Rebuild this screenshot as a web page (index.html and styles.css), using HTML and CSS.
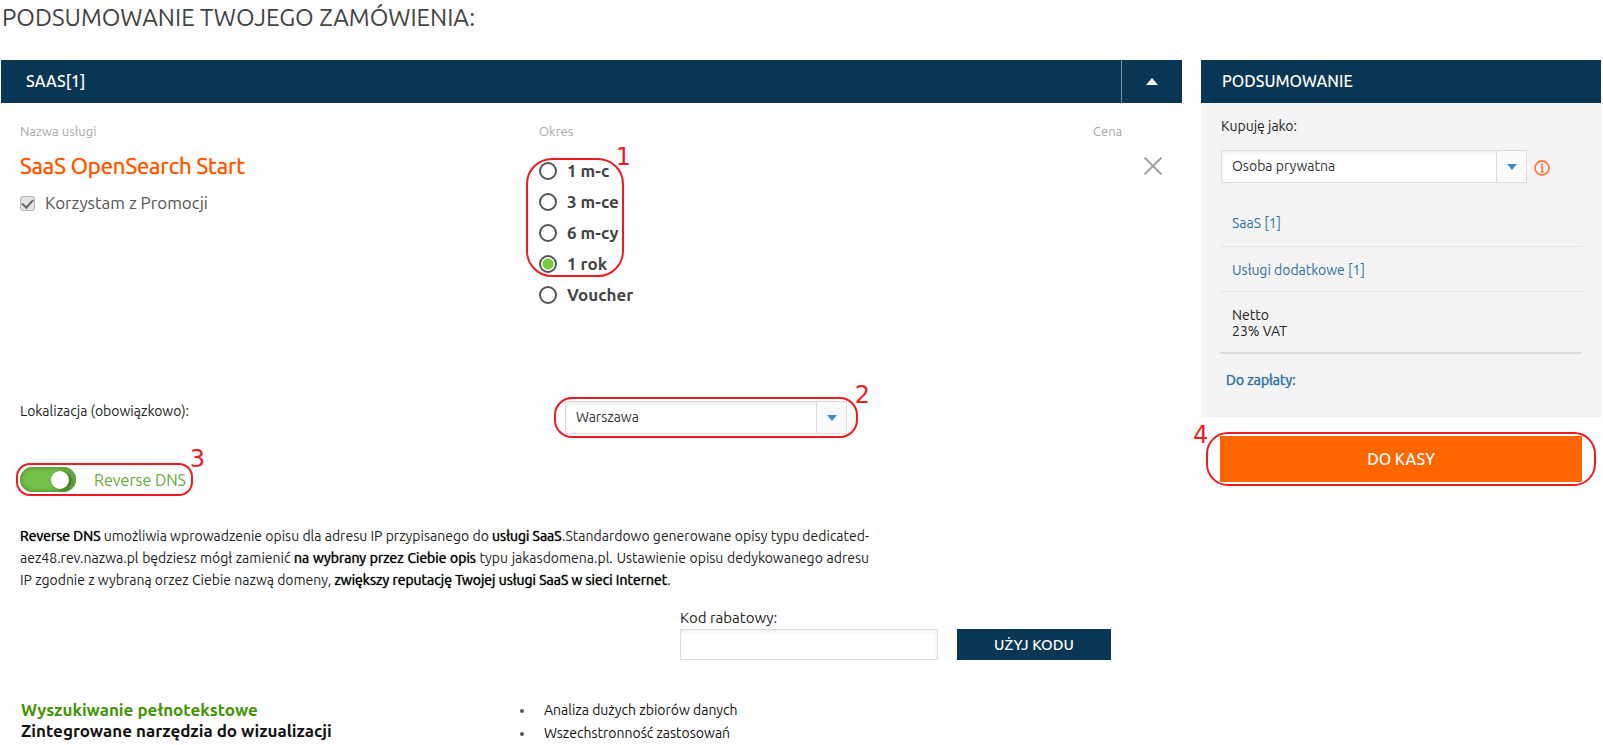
FILE: index.html
```html
<!DOCTYPE html>
<html lang="pl">
<head>
<meta charset="utf-8">
<title>Podsumowanie zamówienia</title>
<link rel="stylesheet" href="styles.css">
</head>
<body>
<h1 class="page-title">PODSUMOWANIE TWOJEGO ZAMÓWIENIA:</h1>
<div class="layout">
  <main class="order">
    <header class="bar">
      <h2 class="bar-title">SAAS[1]</h2>
      <button class="collapse" type="button" aria-label="Zwiń"><svg width="12" height="7" viewBox="0 0 12 7"><path d="M0 7 6 0l6 7z" fill="#fff"/></svg></button>
    </header>

    <section class="service">
      <div class="cell">
        <div class="col-label">Nazwa usługi</div>
        <h3 class="service-name">SaaS OpenSearch Start</h3>
        <label class="promo"><input class="check" type="checkbox" checked>Korzystam z Promocji</label>
      </div>
      <div class="cell">
        <div class="col-label">Okres</div>
        <div class="periods">
          <label class="period"><input class="radio" type="radio" name="period">1 m-c</label>
          <label class="period"><input class="radio" type="radio" name="period">3 m-ce</label>
          <label class="period"><input class="radio" type="radio" name="period">6 m-cy</label>
          <label class="period"><input class="radio" type="radio" name="period" checked>1 rok</label>
          <label class="period"><input class="radio" type="radio" name="period">Voucher</label>
          <div class="mark mark-period"><span class="mark-no">1</span></div>
        </div>
      </div>
      <div class="cell">
        <div class="col-label">Cena</div>
        <button class="remove" type="button" aria-label="Usuń"><svg width="18" height="18" viewBox="0 0 18 18"><path d="M0.500 0.500 17.500 17.500M17.500 0.500 0.500 17.500" stroke="#a3a3a3" stroke-width="2" fill="none"/></svg></button>
      </div>
    </section>

    <section class="location">
      <label class="location-label" for="location">Lokalizacja (obowiązkowo):</label>
      <div class="select location-select">
        <select class="select-box" id="location"><option>Warszawa</option></select>
        <span class="select-arrow"><svg width="10" height="6" viewBox="0 0 10 6"><path d="M0 0h10L5 6z" fill="#428bca"/></svg></span>
        <div class="mark mark-location"><span class="mark-no">2</span></div>
      </div>
    </section>

    <section class="dns">
      <label class="dns-switch"><input class="switch" type="checkbox" checked>Reverse DNS<span class="mark mark-dns"><span class="mark-no">3</span></span></label>
      <p class="dns-text"><b>Reverse DNS</b> umożliwia wprowadzenie opisu dla adresu IP przypisanego do <b>usługi SaaS</b>.Standardowo generowane opisy typu dedicated-aez48.rev.nazwa.pl będziesz mógł zamienić <b>na wybrany przez Ciebie opis</b> typu jakasdomena.pl. Ustawienie opisu dedykowanego adresu IP zgodnie z wybraną orzez Ciebie nazwą domeny, <b>zwiększy reputację Twojej usługi SaaS w sieci Internet</b>.</p>
    </section>

    <form class="coupon">
      <div class="coupon-field">
        <label class="coupon-label" for="code">Kod rabatowy:</label>
        <input class="coupon-input" id="code" type="text">
      </div>
      <button class="coupon-button" type="button">UŻYJ KODU</button>
    </form>

    <section class="features">
      <div class="features-main"><p class="feature-green">Wyszukiwanie pełnotekstowe</p><p>Zintegrowane narzędzia do wizualizacji</p></div>
      <ul class="features-list"><li>Analiza dużych zbiorów danych</li><li>Wszechstronność zastosowań</li></ul>
    </section>
  </main>

  <aside class="summary">
    <header class="bar"><h2 class="bar-title summary-title">PODSUMOWANIE</h2></header>
    <div class="summary-body">
      <label class="buyer-label" for="buyer">Kupuję jako:</label>
      <div class="buyer">
        <div class="select buyer-select">
          <select class="select-box" id="buyer"><option>Osoba prywatna</option></select>
          <span class="select-arrow"><svg width="10" height="6" viewBox="0 0 10 6"><path d="M0 0h10L5 6z" fill="#428bca"/></svg></span>
        </div>
        <svg class="info" width="16" height="16" viewBox="0 0 16 16"><circle cx="8" cy="8" r="7" fill="none" stroke="#ff7f45" stroke-width="1.800"/><circle cx="8" cy="4.600" r="1.200" fill="#ff7f45"/><path d="M6.500 7.200H8.200V12M6.500 12H9.800" fill="none" stroke="#ff7f45" stroke-width="1.700"/></svg>
      </div>
      <a class="line" href="#">SaaS [1]</a>
      <a class="line" href="#">Usługi dodatkowe [1]</a>
      <div class="totals">Netto<br>23% VAT</div>
      <div class="due">Do zapłaty:</div>
    </div>
    <div class="checkout">
      <button class="checkout-button" type="button">DO KASY</button>
      <div class="mark mark-checkout"><span class="mark-no">4</span></div>
    </div>
  </aside>
</div>
</body>
</html>
```
FILE: styles.css
```css
* { box-sizing: border-box; }
body {
  margin: 0;
  background: #fdfdfd;
  color: #222;
  font: 14px/16px Ubuntu, "Noto Sans", "Open Sans", sans-serif;
}
h1, h2, h3, p, ul { margin: 0; padding: 0; font-weight: 400; }
button, input, select { font: inherit; margin: 0; }
button { border: 0; padding: 0; background: none; cursor: pointer; }
svg { display: block; }

.page-title {
  padding: 2px 2px 26px;
  font-size: 24px;
  line-height: 32px;
  color: #444;
}
.layout { display: flex; gap: 19px; padding: 0 2px 0 1px; align-items: flex-start; }
.order { flex: 1; background: #fefefe; }
.summary { flex: 0 0 400px; }

.bar { display: flex; height: 43px; background: #0a3656; color: #fff; }
.bar-title { flex: 1; padding: 0 25px; font-size: 16px; line-height: 43px; font-weight: 500; }
.summary-title { padding: 0 21px; }
.collapse { width: 61px; border-left: 1px solid #7f95a6; display: grid; place-items: center; }

.service { display: grid; grid-template-columns: 519px 1fr 89px; padding: 20px 0 0 19px; }
.col-label { font-size: 13px; line-height: 16px; color: #aaa; }
.service-name { padding-top: 11px; font-size: 22px; line-height: 32px; color: #ff5500; text-shadow: 0 0 1px #ff5500; }
.promo { display: flex; align-items: center; gap: 10px; padding-top: 9px; font-size: 17px; line-height: 24px; color: #555; }
.check {
  appearance: none;
  width: 15px;
  height: 15px;
  border: 1px solid #b4b4b4;
  border-radius: 3px;
  background: #e4e4e4;
  display: grid;
  place-items: center;
}
.check:checked::before {
  content: "";
  width: 9px;
  height: 5px;
  border: solid #666;
  border-width: 0 0 2px 2px;
  transform: translateY(-1px) rotate(-48deg);
}
.periods { position: relative; padding-top: 16px; }
.period { display: flex; align-items: center; gap: 10px; height: 31px; font-size: 17px; line-height: 24px; font-weight: 600; color: #444; }
.radio {
  appearance: none;
  width: 18px;
  height: 18px;
  border: 2px solid #555;
  border-radius: 50%;
  background: #fff;
}
.radio:checked { background: radial-gradient(circle, #7ac943 5px, #fff 6px); }
.remove { margin: 18px 0 0 51px; }

.mark { position: absolute; border: 2px solid #ed1c24; pointer-events: none; }
.mark-no { position: absolute; color: #ed1c24; font: 24px/24px "DejaVu Sans", sans-serif; }
.mark-period { left: -13px; top: 19px; width: 98px; height: 119px; border-radius: 26px; }
.mark-period .mark-no { right: -9px; top: -15px; }
.mark-location { inset: -4px -11px; border-radius: 18px; }
.mark-location .mark-no { right: -14px; top: -16px; }
.mark-dns { inset: -4px -7px -4px -4px; border-radius: 14px; }
.mark-dns .mark-no { right: -14px; top: -18px; }
.mark-checkout { inset: -4px -14px -4px -14px; border-radius: 22px; }
.mark-checkout .mark-no { left: -15px; top: -11px; }

.select { position: relative; display: flex; height: 33px; }
.select-box {
  appearance: none;
  flex: 1;
  height: 33px;
  padding: 0 40px 2px 10px;
  border: 1px solid #ddd;
  border-radius: 0;
  background: #fff;
  box-shadow: inset 0 2px 4px #eee;
  color: #333;
}
.select-arrow {
  position: absolute;
  right: 1px;
  top: 1px;
  bottom: 1px;
  width: 30px;
  border-left: 1px solid #ddd;
  background: #fafafa;
  display: grid;
  place-items: center;
  pointer-events: none;
}
.location { display: flex; padding: 91px 0 0 19px; }
.location-label { width: 545px; padding-top: 2px; }
.location-select { width: 282px; }

.dns { padding: 33px 0 0 19px; }
.dns-switch { position: relative; display: inline-flex; align-items: center; gap: 18px; height: 25px; font-size: 16px; color: #6aaa3c; }
.switch {
  appearance: none;
  width: 56px;
  height: 25px;
  padding: 3px 7px;
  border-radius: 13px;
  background: #76c04a;
  box-shadow: inset 0 0 4px 1px #558b36;
  display: flex;
  align-items: center;
  justify-content: flex-end;
}
.switch::before { content: ""; width: 18px; height: 18px; border-radius: 50%; background: #fff; box-shadow: 3px 1px 4px #38661f; }
.dns-text { max-width: 849px; padding-top: 33px; line-height: 22px; text-align: justify; }
.dns-text b { font-weight: 400; text-shadow: 0 0 1px currentColor; color: #000; }

.coupon { display: flex; align-items: flex-end; gap: 19px; padding: 19px 71px 0 0; justify-content: flex-end; }
.coupon-field { width: 258px; }
.coupon-label { display: block; padding-bottom: 3px; font-size: 15px; }
.coupon-input { display: block; width: 100%; height: 31px; border: 1px solid #ddd; background: #fff; box-shadow: inset 0 2px 4px #eee; }
.coupon-button { width: 154px; height: 31px; background: #0a3656; color: #fff; font-size: 15px; font-weight: 500; }

.features { display: grid; grid-template-columns: 499px 1fr; padding: 39px 0 0 20px; color: #111; }
.features-main { font-size: 17px; line-height: 21px; }
.features-main p { font-weight: 600; }
.feature-green { color: #439400; }
.features-list { list-style: none; line-height: 23px; }
.features-list li { display: flex; align-items: center; gap: 20px; }
.features-list li::before { content: ""; width: 4px; height: 4px; border-radius: 50%; background: #555; }

.summary-body { padding: 15px 19px 29px; background: #f4f4f4; }
.buyer-label { display: block; padding: 0 1px 16px; }
.buyer { display: flex; align-items: center; gap: 7px; padding: 0 0 24px 1px; }
.buyer-select { width: 306px; }
.info { margin-top: 3px; }
.line { display: block; padding: 8px 12px 15px; border-bottom: 1px solid #e5e5e5; color: #31709f; text-decoration: none; }
.line + .line { padding: 15px 12px 13px; }
.totals { padding: 15px 12px 13px; border-bottom: 2px solid #ddd; }
.due { padding: 18px 6px 0; color: #31709f; text-shadow: 0 0 1px currentColor; }
.checkout { position: relative; margin: 19px 19px 0; }
.checkout-button { display: block; width: 100%; height: 46px; background: #ff6600; color: #fff; font-size: 16px; font-weight: 500; }
```
